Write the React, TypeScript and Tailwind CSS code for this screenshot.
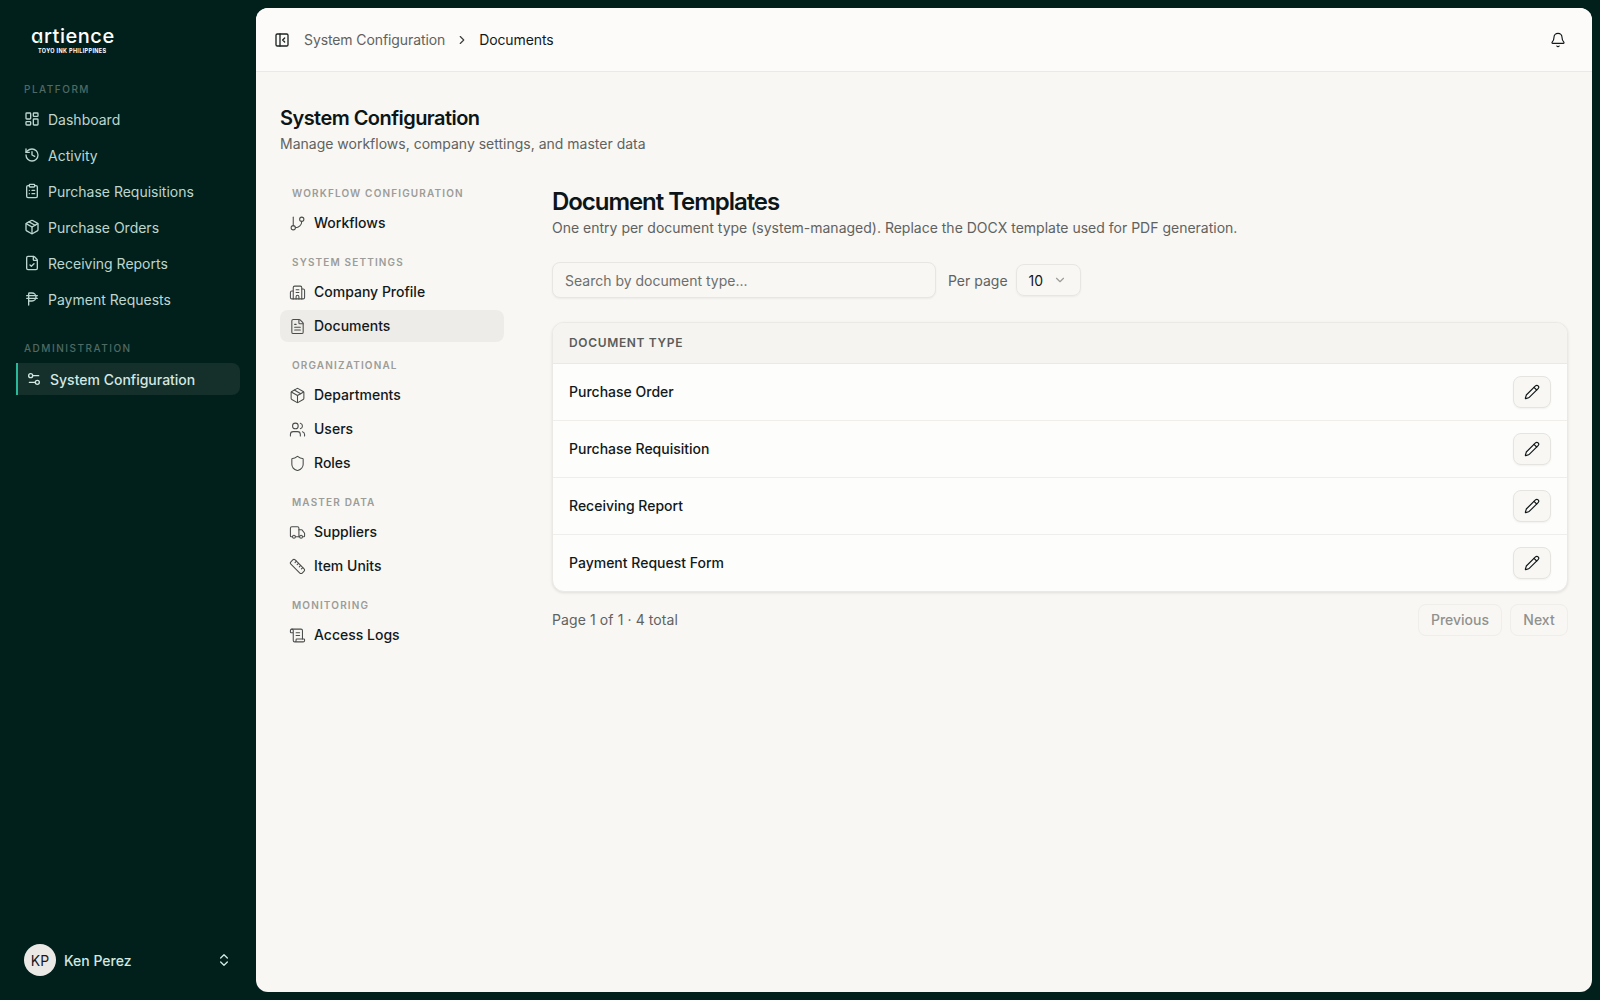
import React from "react";
import {
  LayoutDashboard, History, ClipboardList, Package, FileCheck, PhilippinePeso, Settings2,
  GitBranch, Building2, FileText, Users, Shield, Truck, Ruler, ScrollText, Bell, Pencil,
  ChevronsUpDown, ChevronDown, ChevronRight, PanelLeftClose,
} from "lucide-react";

const platform = [
  { label: "Dashboard", Icon: LayoutDashboard },
  { label: "Activity", Icon: History },
  { label: "Purchase Requisitions", Icon: ClipboardList },
  { label: "Purchase Orders", Icon: Package },
  { label: "Receiving Reports", Icon: FileCheck },
  { label: "Payment Requests", Icon: PhilippinePeso },
];

const configGroups = [
  { title: "WORKFLOW CONFIGURATION", items: [{ label: "Workflows", Icon: GitBranch }] },
  { title: "SYSTEM SETTINGS", items: [{ label: "Company Profile", Icon: Building2 }, { label: "Documents", Icon: FileText, active: true }] },
  { title: "ORGANIZATIONAL", items: [{ label: "Departments", Icon: Package }, { label: "Users", Icon: Users }, { label: "Roles", Icon: Shield }] },
  { title: "MASTER DATA", items: [{ label: "Suppliers", Icon: Truck }, { label: "Item Units", Icon: Ruler }] },
  { title: "MONITORING", items: [{ label: "Access Logs", Icon: ScrollText }] },
];

const rows = ["Purchase Order", "Purchase Requisition", "Receiving Report", "Payment Request Form"];

export default function App() {
  return (
    <div className="flex h-[1000px] w-[1600px] overflow-hidden bg-[#02201b] font-['Inter',sans-serif] text-[14px]">
      <aside className="flex w-[256px] shrink-0 flex-col">
        <div className="relative h-[72px]">
          <div className="absolute left-[31px] top-[22px] text-[20px] font-medium leading-[28px] tracking-[0.55px] text-white">ɑrtience</div>
          <div className="absolute left-[38px] top-[39px] h-[3px] w-[3px] rounded-full bg-[#2bb89a]"></div>
          <div className="absolute left-[38px] top-[47px] text-[5.5px] font-bold leading-[8px] tracking-[0.35px] text-white">TOYO INK PHILIPPINES</div>
        </div>
        <div className="px-6 pt-[11px] text-[10px] font-medium leading-[12px] tracking-[1.5px] text-[#4f6a64]">PLATFORM</div>
        <nav className="mt-[8px] flex flex-col gap-[4px] px-6">
          {platform.map(({ label, Icon }) => (
            <div key={label} className="flex h-[32px] items-center gap-[8px] text-[#bdd6cf]">
              <Icon size={16} strokeWidth={2} className="shrink-0" />
              <span>{label}</span>
            </div>
          ))}
        </nav>
        <div className="px-6 pt-[27px] text-[10px] font-medium leading-[12px] tracking-[1.5px] text-[#4f6a64]">ADMINISTRATION</div>
        <div className="mx-4 mt-[9px] flex h-[32px] items-center gap-[8px] rounded-r-lg border-l-2 border-[#2bb89a] bg-[#152f2b] pl-[8px] font-medium text-[#d3e8e2]">
          <Settings2 size={16} strokeWidth={2} className="shrink-0" />
          <span>System Configuration</span>
        </div>
        <div className="mb-[24px] mt-auto flex h-[32px] items-center px-6">
          <div className="flex h-[32px] w-[32px] items-center justify-center rounded-full bg-[#ebe9e6] text-[14px] text-[#1a1a1a]">KP</div>
          <span className="ml-[8px] font-medium text-[#d3e8e2]">Ken Perez</span>
          <ChevronsUpDown size={16} strokeWidth={2} className="ml-auto text-[#d3e8e2]" />
        </div>
      </aside>

      <main className="my-2 mr-2 flex flex-1 flex-col overflow-hidden rounded-[12px] bg-[#f8f7f4]">
        <header className="flex h-[64px] shrink-0 items-center border-b border-[#ebe9e5] bg-[#fcfbf9] pl-[18px] pr-[26px]">
          <PanelLeftClose size={16} strokeWidth={2} className="text-[#1c2422]" />
          <span className="ml-[14px] tracking-[-0.1px] text-[#60625f]">System Configuration</span>
          <ChevronRight size={14} className="mx-[10px] text-[#3d3f3d]" />
          <span className="tracking-[-0.1px] text-[#12191a]">Documents</span>
          <Bell size={16} strokeWidth={1.75} className="ml-auto text-[#12191a]" />
        </header>

        <div className="flex-1 px-6 pt-[32px]">
          <h1 className="text-[20px] font-semibold leading-[28px] tracking-[-0.55px] text-[#0c1517]">System Configuration</h1>
          <p className="mt-[2px] leading-[20px] text-[#60625f]">Manage workflows, company settings, and master data</p>

          <div className="mt-[21px] flex gap-[48px]">
            <nav className="w-[224px] shrink-0">
              {configGroups.map((g, i) => (
                <div key={g.title} className={i === 0 ? "" : "mt-[5px]"}>
                  <div className="flex h-[32px] items-center px-3 pt-[4px] text-[10px] font-semibold tracking-[1.15px] text-[#9c9c98]">{g.title}</div>
                  <div className="flex flex-col gap-[2px]">
                    {g.items.map(({ label, Icon, active }: any) => (
                      <div key={label} className={`flex h-[32px] items-center gap-[8px] rounded-lg px-[9px] font-medium text-[#12191a] ${active ? "bg-[#eeece8]" : ""}`}>
                        <Icon size={17} strokeWidth={1.5} className="shrink-0 text-[#4a4d4b]" />
                        <span className="pb-[1px]">{label}</span>
                      </div>
                    ))}
                  </div>
                </div>
              ))}
            </nav>

            <section className="min-w-0 flex-1 pt-[11px]">
              <h2 className="text-[24px] font-semibold leading-[32px] tracking-[-1.05px] text-[#0c1517]">Document Templates</h2>
              <p className="leading-[20px] text-[#60625f]">One entry per document type (system-managed). Replace the DOCX template used for PDF generation.</p>

              <div className="mt-[24px] flex items-center">
                <div className="flex h-[36px] w-[384px] items-center rounded-lg border border-[#e8e6e2] bg-[#f8f7f4] px-3 text-[#6d6f6c] shadow-[0_1px_2px_rgba(0,0,0,0.05)]">Search by document type...</div>
                <span className="ml-3 text-[#60625f]">Per page</span>
                <div className="ml-2 flex h-[32px] w-[65px] items-center justify-between rounded-lg border border-[#e8e6e2] pl-3 pr-[13px] text-[#12191a] shadow-[0_1px_2px_rgba(0,0,0,0.05)]">
                  <span>10</span>
                  <ChevronDown size={14} className="text-[#9c9c98]" />
                </div>
              </div>

              <div className="mt-[24px] overflow-hidden rounded-xl border border-[#ebe9e5] bg-[#fdfdfc] shadow-[0_1px_3px_rgba(0,0,0,0.1)]">
                <div className="flex h-[41px] items-center border-b border-[#ebe9e5] bg-[#f5f4f1] px-4 text-[12px] font-semibold tracking-[0.65px] text-[#5a5c5a]">DOCUMENT TYPE</div>
                {rows.map((r, i) => (
                  <div key={r} className={`flex items-center justify-between px-4 font-medium text-[#12191a] ${i < 3 ? "h-[57px] border-b border-[#efeeea]" : "h-[56px]"}`}>
                    <span className="pb-[1px]">{r}</span>
                    <div className="flex h-[32px] w-[38px] items-center justify-center rounded-lg border border-[#e6e4e0] bg-[#f8f7f4] shadow-[0_1px_2px_rgba(0,0,0,0.05)]">
                      <Pencil size={16} strokeWidth={1.75} className="text-[#12191a]" />
                    </div>
                  </div>
                ))}
              </div>

              <div className="mt-[12px] flex items-center justify-between">
                <span className="pb-[1px] tracking-[0.1px] text-[#60625f]">Page 1 of 1 · 4 total</span>
                <div className="flex gap-2">
                  <div className="flex h-[32px] w-[84px] items-center justify-center rounded-lg border border-[#efeeea] pb-[1px] font-medium text-[#90918e]">Previous</div>
                  <div className="flex h-[32px] w-[58px] items-center justify-center rounded-lg border border-[#efeeea] pb-[1px] font-medium text-[#90918e]">Next</div>
                </div>
              </div>
            </section>
          </div>
        </div>
      </main>
    </div>
  );
}
